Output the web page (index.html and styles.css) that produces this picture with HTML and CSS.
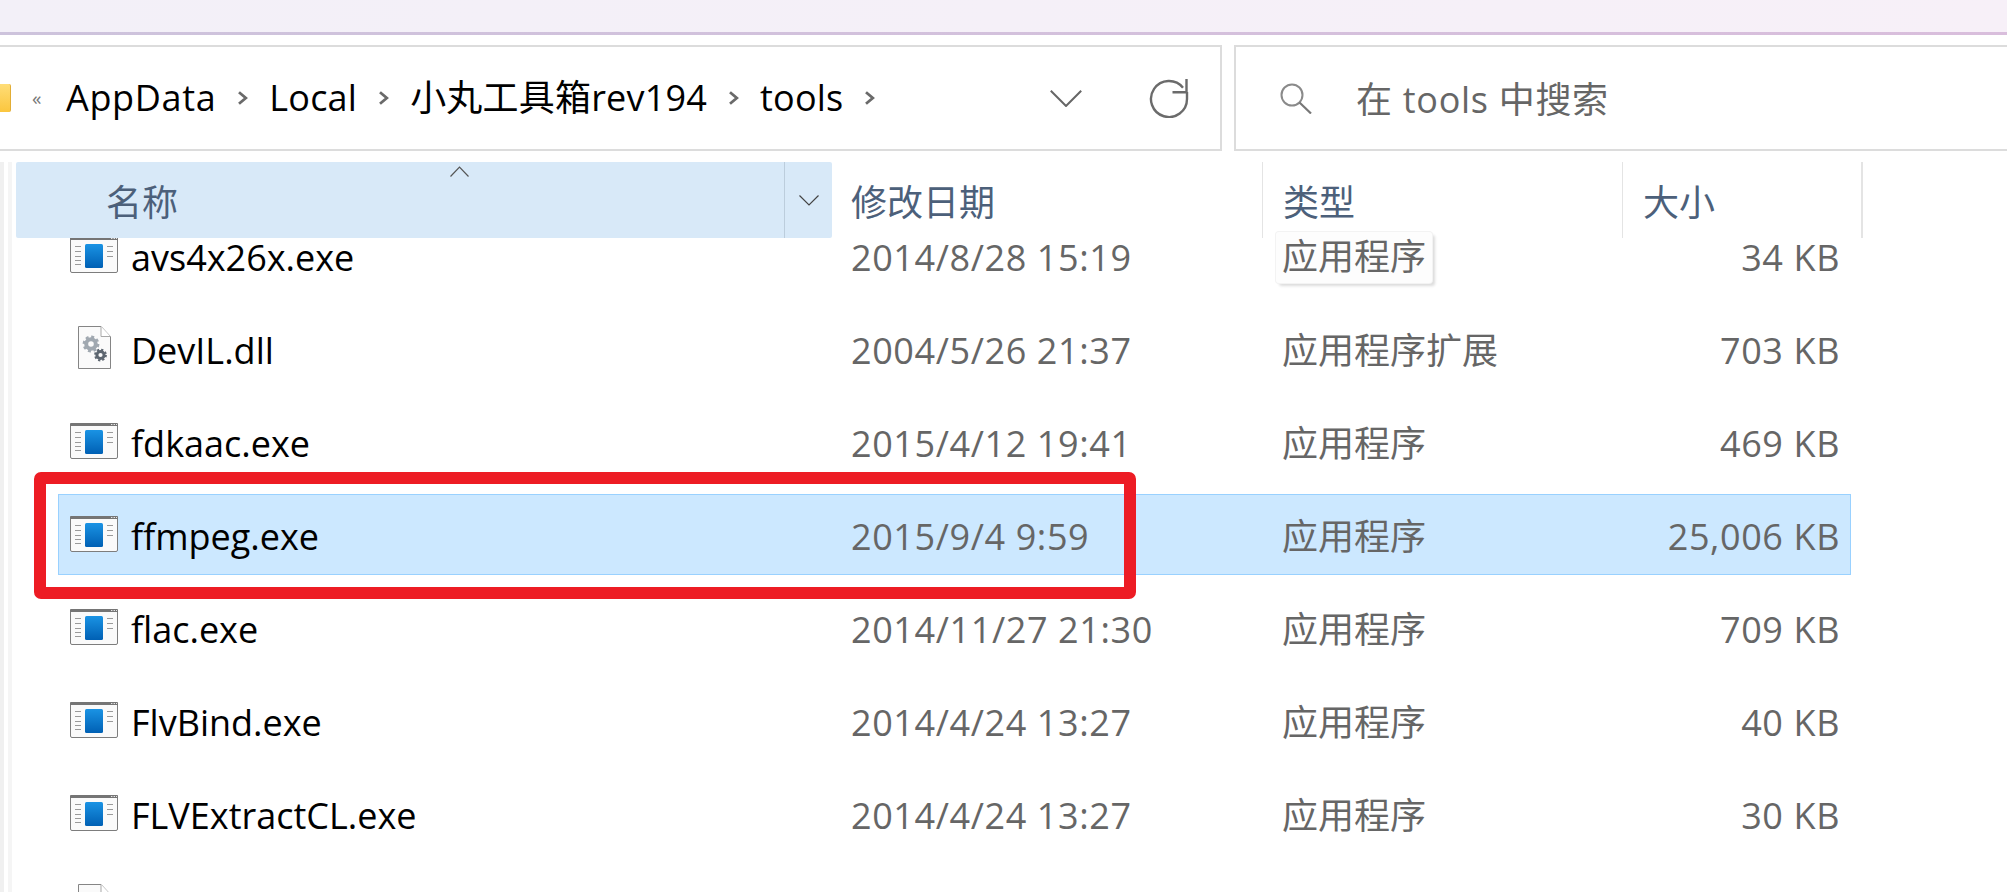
FILE: index.html
```html
<!DOCTYPE html>
<html lang="zh-CN">
<head>
<meta charset="utf-8">
<title>tools</title>
<link rel="stylesheet" href="styles.css">
</head>
<body>
<svg class="defs" width="0" height="0" aria-hidden="true">
  <defs>
    <linearGradient id="blue" x1="0" y1="0" x2="0" y2="1">
      <stop offset="0" stop-color="#1a93e4"/>
      <stop offset="1" stop-color="#0060b4"/>
    </linearGradient>
    <symbol id="exe" viewBox="0 0 48 36">
      <rect x=".5" y=".5" width="47" height="35" rx="1.5" fill="#fafafa" stroke="#7d7d7d"/>
      <rect x="0" y="0" width="48" height="3" rx="1" fill="#757575"/>
      <path d="M41 1.500h1.400M43.600 1.500H45M46 1.500h1" stroke="#e6e6e6" stroke-width="1"/>
      <rect x="15" y="7" width="18" height="24" rx="1.500" fill="url(#blue)"/>
      <path d="M5 9.500h6M5 14.500h6M5 19.500h6M5 23.500h6M5 27.500h6M37 9.500h6M37 14.500h6M37 19.500h6" stroke="#9a9a9a" stroke-width="1"/>
    </symbol>
    <symbol id="doc" viewBox="0 0 33 43">
      <path d="M.5.5H23L32.500 10.500V42.500H.5Z" fill="#fafafa" stroke="#858585"/>
      <path d="M23 .5V10.500H32.500" fill="#fff" stroke="#a8a8a8"/>
      <circle cx="13" cy="18" r="4.800" fill="none" stroke="#a0a8b0" stroke-width="4"/>
      <circle cx="13" cy="18" r="7.200" fill="none" stroke="#a0a8b0" stroke-width="2.400" stroke-dasharray="3 2.650"/>
      <circle cx="22.500" cy="29" r="3.600" fill="none" stroke="#5d6670" stroke-width="3"/>
      <circle cx="22.500" cy="29" r="5.400" fill="none" stroke="#5d6670" stroke-width="2" stroke-dasharray="2.200 2.040"/>
    </symbol>
    <symbol id="chev" viewBox="0 0 11 14">
      <path d="M2 1.200 8.800 7 2 12.800" fill="none" stroke="#6a6a6a" stroke-width="2.800"/>
    </symbol>
  </defs>
</svg>

<div class="strip"></div>

<nav class="nav">
  <div class="address">
    <span class="folder"></span>
    <span class="more">«</span>
    <span class="crumb crumb-wide">AppData</span>
    <svg class="sep"><use href="#chev"/></svg>
    <span class="crumb">Local</span>
    <svg class="sep"><use href="#chev"/></svg>
    <span class="crumb">小丸工具箱rev194</span>
    <svg class="sep"><use href="#chev"/></svg>
    <span class="crumb">tools</span>
    <svg class="sep"><use href="#chev"/></svg>
    <svg class="drop" viewBox="0 0 32 17"><path d="M.8.8 16 16 31.200.8" fill="none" stroke="#666" stroke-width="2"/></svg>
    <svg class="refresh" viewBox="0 0 40 39"><path d="M34 8.700A18 18 0 1 0 38 20V13" fill="none" stroke="#6b6b6b" stroke-width="2.400"/><path d="M37.500 0V13.200H23.500" fill="none" stroke="#6b6b6b" stroke-width="2.400"/></svg>
  </div>
  <div class="search">
    <svg class="lens" viewBox="0 0 32 31"><circle cx="12" cy="12" r="10.500" fill="none" stroke="#8a8a8a" stroke-width="2"/><path d="M19.500 19.500 31 30.500" fill="none" stroke="#777" stroke-width="2.200"/></svg>
    <span class="placeholder">在 tools 中搜索</span>
  </div>
</nav>

<main class="list">
  <div class="gutter"></div>
  <section class="table">
    <header class="head">
      <div class="col col-name">
        <span>名称</span>
        <svg class="sort" viewBox="0 0 19 11"><path d="M.5 10.500 9.500 1 18.500 10.500" fill="none" stroke="#555" stroke-width="1.200"/></svg>
        <div class="filter"><svg viewBox="0 0 20 11"><path d="M.5.5 10 10 19.500.5" fill="none" stroke="#444" stroke-width="1.200"/></svg></div>
      </div>
      <div class="col col-date">修改日期</div>
      <div class="col col-type">类型</div>
      <div class="col col-size">大小</div>
    </header>
    <div class="rows">
      <div class="row">
        <div class="name"><svg class="ico-exe"><use href="#exe"/></svg>avs4x26x.exe</div>
        <div class="num">2014/8/28 15:19</div>
        <div><span class="hover">应用程序</span></div>
        <div class="num size">34 KB</div>
      </div>
      <div class="row">
        <div class="name"><span class="ico-slot"><svg class="ico-doc"><use href="#doc"/></svg></span>DevIL.dll</div>
        <div class="num">2004/5/26 21:37</div>
        <div>应用程序扩展</div>
        <div class="num size">703 KB</div>
      </div>
      <div class="row">
        <div class="name"><svg class="ico-exe"><use href="#exe"/></svg>fdkaac.exe</div>
        <div class="num">2015/4/12 19:41</div>
        <div>应用程序</div>
        <div class="num size">469 KB</div>
      </div>
      <div class="row selected">
        <div class="name"><svg class="ico-exe"><use href="#exe"/></svg>ffmpeg.exe</div>
        <div class="num">2015/9/4 9:59</div>
        <div>应用程序</div>
        <div class="num size">25,006 KB</div>
        <div class="mark"></div>
      </div>
      <div class="row">
        <div class="name"><svg class="ico-exe"><use href="#exe"/></svg>flac.exe</div>
        <div class="num">2014/11/27 21:30</div>
        <div>应用程序</div>
        <div class="num size">709 KB</div>
      </div>
      <div class="row">
        <div class="name"><svg class="ico-exe"><use href="#exe"/></svg>FlvBind.exe</div>
        <div class="num">2014/4/24 13:27</div>
        <div>应用程序</div>
        <div class="num size">40 KB</div>
      </div>
      <div class="row">
        <div class="name"><svg class="ico-exe"><use href="#exe"/></svg>FLVExtractCL.exe</div>
        <div class="num">2014/4/24 13:27</div>
        <div>应用程序</div>
        <div class="num size">30 KB</div>
      </div>
      <div class="row">
        <div class="name"><span class="ico-slot"><svg class="ico-doc"><use href="#doc"/></svg></span></div>
      </div>
    </div>
  </section>
</main>
</body>
</html>
```
FILE: styles.css
```css
* { box-sizing: border-box; }
html, body { margin: 0; height: 892px; overflow: hidden; background: #fff; }
body {
  font-family: "Open Sans", "Noto Sans CJK SC", sans-serif;
  font-size: 36px;
  width: 2007px;
}
.defs { position: absolute; }

.strip {
  height: 35px;
  background: linear-gradient(90deg, #f3f0f8, #f7f0f8);
  border-bottom: 3px solid;
  border-image: linear-gradient(90deg, #cdc3dc, #d9bedc) 1;
}

.nav { display: flex; gap: 12px; margin-top: 10px; height: 106px; }
.address, .search {
  display: flex;
  align-items: center;
  border: 2px solid #dcdcdc;
  height: 106px;
}
.address { width: 1222px; border-left: 0; color: #000; }
.search { flex: 1; border-right: 0; color: #666; }

.folder {
  width: 11px;
  height: 28px;
  border-radius: 0 2px 2px 0;
  background: linear-gradient(180deg, #ffdd77, #fbc63e);
  border-right: 1px solid #e2ad35;
}
.more { margin-left: 21px; width: 34px; font-size: 19px; color: #777; line-height: 1; }
.crumb { white-space: nowrap; line-height: 1; letter-spacing: .2px; }
.crumb-wide { letter-spacing: .65px; }
.sep { width: 11px; height: 14px; margin: 0 21px; }
.drop { width: 32px; height: 17px; margin-left: auto; }
.refresh { width: 40px; height: 39px; margin-left: 67px; margin-right: 31px; }

.lens { width: 32px; height: 31px; margin-left: 44px; }
.placeholder { margin-left: 44px; white-space: nowrap; letter-spacing: .7px; position: relative; top: -1px; }

.list { display: flex; margin-top: 11px; }
.gutter {
  width: 16px;
  height: 730px;
  flex: none;
  background: linear-gradient(90deg, #f0f0f0 0 4px, #fff 4px 8px, #f5f5f5 8px 12px, #fff 12px);
}
.table { flex: 1; display: flex; flex-direction: column; min-width: 0; }

.head {
  height: 76px;
  flex: none;
  display: grid;
  grid-template-columns: 816px 431px 360px 240px;
  color: #4c607a;
  position: relative;
  z-index: 1;
  line-height: 1;
}
.col {
  display: flex;
  align-items: center;
  position: relative;
  padding: 5px 0 0 19px;
  border-right: 1px solid #e4e4e4;
}
.col-name {
  background: #d8e9f8;
  border-right: 0;
  border-radius: 2px;
  padding-left: 90px;
}
.col-type { padding-left: 20px; }
.col-size { padding-left: 20px; border-right: 2px solid #e4e4e4; }
.sort { position: absolute; left: 434px; top: 4px; width: 19px; height: 11px; }
.filter {
  position: absolute;
  right: 0;
  top: 0;
  width: 48px;
  height: 100%;
  border-left: 1px solid #bccddc;
  display: flex;
  align-items: center;
  justify-content: center;
}
.filter svg { width: 20px; height: 11px; }

.rows {
  margin-top: -23px;
  padding-left: 42px;
  height: 677px;
  overflow: hidden;
  display: flex;
  flex-direction: column;
  gap: 12px;
}
.row {
  width: 1793px;
  height: 81px;
  flex: none;
  display: grid;
  grid-template-columns: 793px 431px 300px 258px;
  align-items: center;
  position: relative;
  color: #666;
  white-space: nowrap;
  line-height: 36px;
  padding-top: 4px;
}
.name { display: flex; align-items: center; color: #000; padding-left: 12px; }
.ico-exe { width: 48px; height: 36px; margin-right: 13px; flex: none; position: relative; top: -3px; }
.ico-slot { width: 48px; margin-right: 13px; flex: none; display: flex; justify-content: center; }
.ico-doc { width: 33px; height: 43px; position: relative; top: -3px; }
.num { letter-spacing: .6px; }
.size { text-align: right; }
.selected { background: #cce8ff; outline: 1px solid #99d1ff; outline-offset: -1px; }
.mark {
  position: absolute;
  left: -24px;
  top: -22px;
  width: 1102px;
  height: 127px;
  border: 12px solid #ed1c24;
  border-radius: 7px;
}
.hover {
  display: inline-block;
  width: 156px;
  height: 51px;
  margin-left: -6px;
  padding: 7px 0 0 6px;
  background: #fdfdfd;
  border-radius: 3px;
  box-shadow: 0 0 0 1px #f3f3f3, 3px 3px 3px rgba(0, 0, 0, .14);
  vertical-align: middle;
}
```
